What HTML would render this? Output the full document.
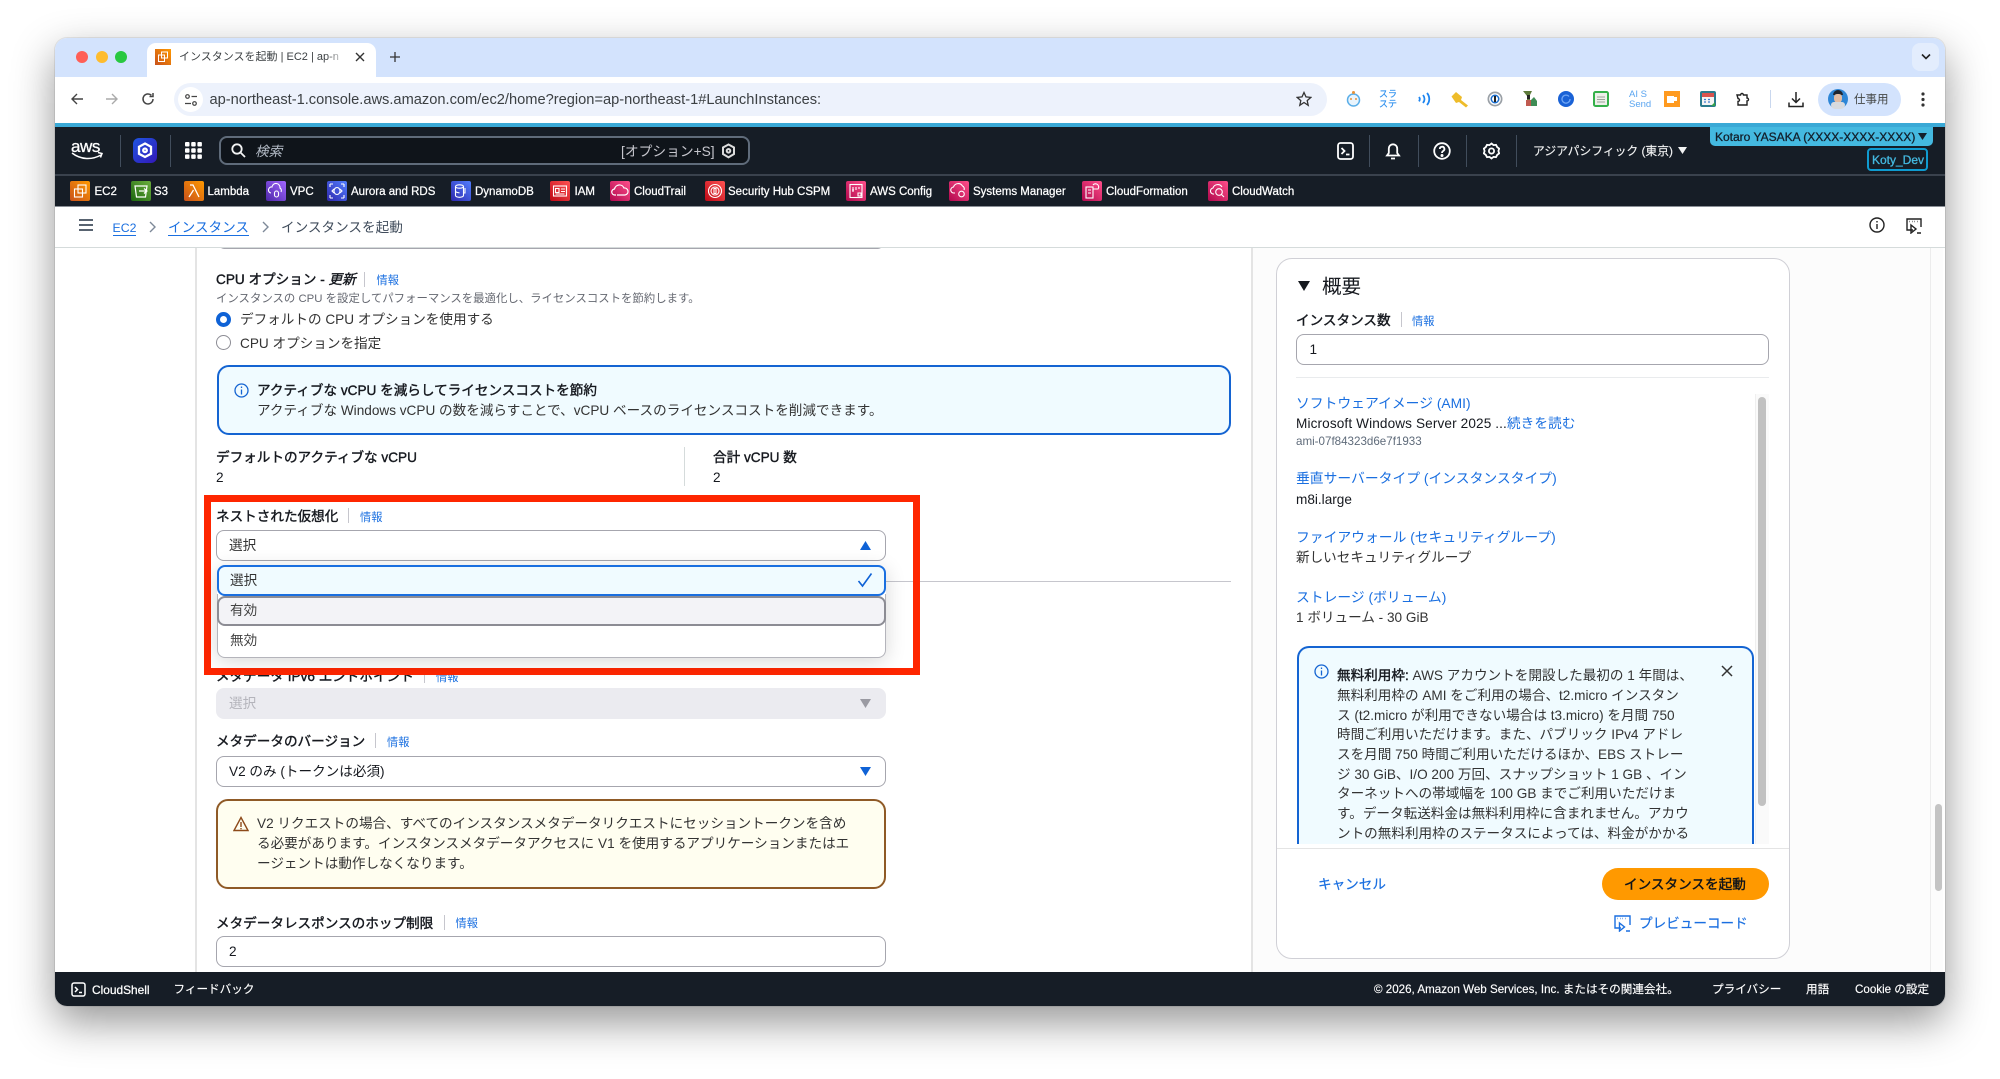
<!DOCTYPE html>
<html lang="ja"><head><meta charset="utf-8"><title>インスタンスを起動</title>
<style>
*{box-sizing:border-box}
html,body{margin:0;padding:0;width:2000px;height:1079px;overflow:hidden;background:#fff}
body{font-family:"Liberation Sans","Noto Sans CJK JP",sans-serif;color:#16191f;position:relative}
.a{position:absolute}
.t{position:absolute;white-space:nowrap;line-height:20px;height:20px;font-size:13.6px;color:#16191f;margin-top:1px}
.b{font-weight:400;-webkit-text-stroke:.4px currentColor}
.l{color:#1a6fe0}
.rl{font-size:13.8px}
.i{font-size:11.2px;color:#1a6fe0}
.w{color:#fff;font-size:11.6px}
.fi{position:absolute;top:181px;width:20px;height:20px;border-radius:2px}
.fi svg{position:absolute;left:0;top:0}
.f{position:absolute;top:182px;line-height:20px;font-size:11.5px;color:#fff;white-space:nowrap;-webkit-text-stroke:.25px #fff}
.d{position:absolute;width:1px;background:#c6c6cd}
.nd{position:absolute;width:1px;background:#414d5c;top:135px;height:32px}
.inp{position:absolute;background:#fff;border:1.5px solid #a6a6ae;border-radius:8px}
.or{background:linear-gradient(45deg,#c8511b,#ff9900)}.gr{background:linear-gradient(45deg,#1b660f,#6cae3e)}
.pu{background:linear-gradient(45deg,#4d27a8,#a166ff)}.bl{background:linear-gradient(45deg,#2e27ad,#527fff)}
.re{background:linear-gradient(45deg,#bd0816,#ff5252)}.pk{background:linear-gradient(45deg,#b0084d,#ff4f8b)}
</style></head><body>

<!-- window -->
<div class="a" style="left:55px;top:38px;width:1890px;height:968px;border-radius:12px;box-shadow:0 16px 42px rgba(0,0,0,.42),0 0 0 1px rgba(0,0,0,.08);background:#fff;overflow:hidden">
<div style="position:absolute;left:-55px;top:-38px;width:2000px;height:1079px">

<!-- tab strip -->
<div class="a" style="left:0;top:37px;width:2000px;height:40px;background:#d3e3fd"></div>
<div class="a" style="left:75.5px;top:51px;width:12px;height:12px;border-radius:50%;background:#ff5f57"></div>
<div class="a" style="left:95.5px;top:51px;width:12px;height:12px;border-radius:50%;background:#febc2e"></div>
<div class="a" style="left:115px;top:51px;width:12px;height:12px;border-radius:50%;background:#28c840"></div>
<div class="a" style="left:147px;top:43px;width:229px;height:34px;background:#fff;border-radius:9px 9px 0 0"></div>
<div class="a or" style="left:155px;top:49px;width:16px;height:16px"><svg width="16" height="16" fill="none" stroke="#fff" stroke-width="1"><rect x="6.5" y="3" width="6" height="6"/><rect x="3.5" y="6" width="6" height="6.5"/></svg></div>
<div class="t" style="left:179px;top:46px;font-size:11px;color:#3c4043;width:165px;overflow:hidden">インスタンスを起動 | EC2 | ap-n</div>
<div class="a" style="left:326px;top:47px;width:20px;height:20px;background:linear-gradient(90deg,rgba(255,255,255,0),#fff)"></div>
<svg class="a" style="left:355px;top:52px" width="10" height="10" stroke="#333" stroke-width="1.4"><path d="M1 1l8 8M9 1l-8 8"/></svg>
<svg class="a" style="left:389px;top:51px" width="12" height="12" stroke="#333" stroke-width="1.3"><path d="M6 1v10M1 6h10"/></svg>
<div class="a" style="left:1912px;top:43px;width:27px;height:28px;border-radius:8px;background:#e3edfd"></div>
<svg class="a" style="left:1921px;top:53px" width="10" height="8" fill="none" stroke="#222" stroke-width="1.6"><path d="M1 1.5l4 4 4-4"/></svg>

<!-- toolbar -->
<div class="a" style="left:0;top:77px;width:2000px;height:46px;background:#fff"></div>
<svg class="a" style="left:70px;top:92px" width="14" height="14" fill="none" stroke="#444" stroke-width="1.4"><path d="M13 7H2M7 2L2 7l5 5"/></svg>
<svg class="a" style="left:105px;top:92px" width="14" height="14" fill="none" stroke="#aaa" stroke-width="1.4"><path d="M1 7h11M7 2l5 5-5 5"/></svg>
<svg class="a" style="left:141px;top:92px" width="14" height="14" fill="none" stroke="#444" stroke-width="1.5"><path d="M12 7a5 5 0 1 1-1.6-3.7M12 1v3.5H8.5"/></svg>
<div class="a" style="left:174px;top:83px;width:1153px;height:33px;background:#edf2fc;border-radius:17px"></div>
<div class="a" style="left:178px;top:87px;width:25px;height:25px;background:#fff;border-radius:50%"></div>
<svg class="a" style="left:184px;top:93px" width="14" height="14" fill="none" stroke="#444" stroke-width="1.2"><circle cx="3.5" cy="3.5" r="1.8"/><path d="M7.5 3.5H13M1 10.5h6"/><circle cx="10.5" cy="10.5" r="1.8"/></svg>
<div class="t" style="left:209.5px;top:88.5px;font-size:14.65px;color:#3c4043">ap-northeast-1.console.aws.amazon.com/ec2/home?region=ap-northeast-1#LaunchInstances:</div>
<svg class="a" style="left:1296px;top:91px" width="16" height="16" fill="none" stroke="#333" stroke-width="1.3"><path d="M8 1.5l2 4.4 4.8.5-3.6 3.2 1 4.7L8 11.5l-4.2 2.8 1-4.7L1.2 6.4 6 5.9z"/></svg>
<!-- extensions -->
<svg class="a" style="left:1346px;top:90px" width="15" height="18"><circle cx="7.5" cy="10" r="6" fill="#e8f4fd" stroke="#5aaee8" stroke-width="1.5"/><circle cx="7.5" cy="2.5" r="1.5" fill="#e8933a"/><circle cx="5" cy="9" r="1" fill="#e8933a"/><circle cx="10" cy="9" r="1" fill="#e8933a"/></svg>
<div class="a" style="left:1379px;top:90px;font-size:9px;line-height:9.5px;color:#2f90ee;width:20px;white-space:nowrap;-webkit-text-stroke:.2px #2f90ee">スラ<br>ステ</div>
<svg class="a" style="left:1417px;top:91px" width="15" height="16" fill="none" stroke="#1f86f0" stroke-width="1.8"><path d="M2 6c1 1.3 1 3 0 4.4M6 4c2 2.5 2 5.500 0 8M10 2c3 3.500 3 8.500 0 12"/></svg>
<svg class="a" style="left:1451px;top:91px" width="18" height="17"><path d="M0.500 5.500L5 1l6 5-1 3 7 5.500-2 2-7-5.500-3 1z" fill="#eebc2a"/></svg>
<svg class="a" style="left:1487px;top:91px" width="16" height="16"><circle cx="8" cy="8" r="7.500" fill="#9aa0a6"/><circle cx="8" cy="8" r="5.800" fill="#fff"/><circle cx="8" cy="8" r="4.500" fill="#1a6fd0"/><circle cx="8" cy="8" r="3" fill="#fff"/><rect x="7" y="5" width="2" height="6" fill="#222"/></svg>
<svg class="a" style="left:1523px;top:90px" width="15" height="18"><path d="M0 1h9l-2 4v10H4V6z" fill="#5d7a3a"/><rect x="4" y="5" width="3" height="4" fill="#222"/><rect x="3" y="10" width="5" height="6" fill="#c05a50"/><path d="M8 10l3-3 3 4v5H8z" fill="#3f8c55"/></svg>
<svg class="a" style="left:1558px;top:91px" width="16" height="16"><circle cx="8" cy="8" r="8" fill="#1a62d6"/><path d="M11 5.500A4 4 0 1 0 12 8" fill="none" stroke="#6ea5f5" stroke-width="1.300"/></svg>
<svg class="a" style="left:1593px;top:91px" width="16" height="16"><rect x="1" y="1" width="14" height="14" rx="1.500" fill="#eef0ea" stroke="#35b04a" stroke-width="2"/><path d="M4 6h8M4 8.500h8M4 11h8" stroke="#9aa39a"/></svg>
<div class="a" style="left:1629px;top:90px;font-size:9.500px;line-height:9.500px;color:#5aa5f0;text-align:center;width:16px;white-space:nowrap">AI S<br>Send</div>
<div class="a" style="left:1664px;top:91px;width:16px;height:16px;background:#ff9a1f"></div><div class="a" style="left:1667px;top:96px;width:7px;height:7px;background:#fff"></div><div class="a" style="left:1674px;top:97px;width:3px;height:4px;background:#fff"></div>
<svg class="a" style="left:1700px;top:91px" width="16" height="16"><rect width="16" height="16" rx="2" fill="#2a7a8e"/><rect x="2" y="2" width="12" height="12" fill="#f4f4f4"/><rect x="2" y="2" width="12" height="4" fill="#d9534f"/><path d="M4 8.500h2M8 8.500h2M4 11h2M8 11h2" stroke="#3a7ad0" stroke-width="1.200"/><path d="M11 15l4-4v4z" fill="#35a04a"/></svg>
<svg class="a" style="left:1735px;top:91px" width="16" height="16" fill="none" stroke="#222" stroke-width="1.400"><path d="M2 4h3.500a1.500 1.500 0 0 1 3 0H12v3a1.500 1.500 0 0 1 0 3v4H3v-3.500a1.500 1.500 0 0 0 0-3z"/></svg>
<div class="a" style="left:1770px;top:90px;width:1px;height:18px;background:#c9d7ee"></div>
<svg class="a" style="left:1788px;top:91px" width="16" height="17" fill="none" stroke="#222" stroke-width="1.500"><path d="M8 1v10M4 7.500l4 4 4-4M1 11.500v4h14v-4"/></svg>
<div class="a" style="left:1818px;top:83px;width:83px;height:33px;border-radius:17px;background:#d3e3fd"></div>
<div class="a" style="left:1828px;top:89px;width:20px;height:20px;border-radius:50%;background:#2e86d6;overflow:hidden"></div>
<div class="a" style="left:1833px;top:90px;width:10px;height:5px;border-radius:5px 5px 0 0;background:#1f2630"></div>
<div class="a" style="left:1834px;top:94px;width:8px;height:9px;border-radius:3px 3px 4px 4px;background:#e2bda4"></div>
<div class="a" style="left:1831px;top:102px;width:14px;height:7px;background:#d8dade;border-radius:5px 5px 7px 7px"></div>
<div class="t" style="left:1854px;top:88.5px;font-size:11.500px;color:#444746">仕事用</div>
<svg class="a" style="left:1921px;top:92px" width="4" height="15" fill="#333"><circle cx="2" cy="2" r="1.600"/><circle cx="2" cy="7.500" r="1.600"/><circle cx="2" cy="13" r="1.600"/></svg>

<!-- aws nav -->
<div class="a" style="left:0;top:123px;width:2000px;height:4px;background:#3aa9d6"></div>
<div class="a" style="left:0;top:127px;width:2000px;height:79px;background:#161d26"></div>
<div class="a" style="left:0;top:174px;width:2000px;height:1.500px;background:#3a424d"></div>
<div class="a" style="left:0;top:205.500px;width:2000px;height:1.500px;background:#8a8f96"></div>
<div class="a" style="left:71px;top:137px;line-height:20px;color:#fff;font-size:17px;letter-spacing:-.4px;-webkit-text-stroke:.3px #fff">aws</div>
<svg class="a" style="left:71px;top:151px" width="33" height="11" fill="none" stroke="#fff" stroke-width="1.500"><path d="M1 2c9 7 20 7 29 2M27 1.500l4 1-1.500 4"/></svg>
<div class="nd" style="left:120px"></div>
<div class="a" style="left:133px;top:138px;width:24px;height:25px;border-radius:6px;background:linear-gradient(135deg,#1f55e0,#3318b8)"></div>
<svg class="a" style="left:137px;top:142px" width="16" height="17" fill="none" stroke="#fff" stroke-width="2.300"><path d="M8 1.500l6 3.300v7L8 15l-6-3.200v-7z"/><circle cx="8" cy="8.300" r="1.800" /></svg>
<div class="nd" style="left:170px"></div>
<svg class="a" style="left:185px;top:142px" width="17" height="17" fill="#fff"><rect width="4.500" height="4.500" rx="1"/><rect x="6.200" width="4.500" height="4.500" rx="1"/><rect x="12.400" width="4.500" height="4.500" rx="1"/><rect y="6.200" width="4.500" height="4.500" rx="1"/><rect x="6.200" y="6.200" width="4.500" height="4.500" rx="1"/><rect x="12.400" y="6.200" width="4.500" height="4.500" rx="1"/><rect y="12.400" width="4.500" height="4.500" rx="1"/><rect x="6.200" y="12.400" width="4.500" height="4.500" rx="1"/><rect x="12.400" y="12.400" width="4.500" height="4.500" rx="1"/></svg>
<div class="a" style="left:219px;top:136px;width:531px;height:29px;border-radius:8px;background:#0f141a;border:2px solid #5f6b7a"></div>
<svg class="a" style="left:231px;top:143px" width="15" height="15" fill="none" stroke="#f2f3f3" stroke-width="1.800"><circle cx="6" cy="6" r="4.700"/><path d="M9.500 9.500L14 14"/></svg>
<div class="t" style="left:255px;top:140.5px;color:#b6bec9;font-style:italic;font-size:13.600px">検索</div>
<div class="t" style="left:621px;top:140.5px;color:#c6c6cd;font-size:13.750px">[オプション+S]</div>
<svg class="a" style="left:721px;top:143px" width="15" height="16" fill="none" stroke="#dcdcdc" stroke-width="2"><path d="M7.500 1.500l5.500 3v6.500l-5.500 3.300L2 11V4.500z"/><circle cx="7.500" cy="7.800" r="1.800"/></svg>

<svg class="a" style="left:1337px;top:142px" width="17" height="18" fill="none" stroke="#fff" stroke-width="1.800"><rect x="1" y="1" width="15" height="16" rx="2.500"/><path d="M4.500 6l3 3-3 3M9 12.500h3.500"/></svg>
<div class="nd" style="left:1369px"></div>
<svg class="a" style="left:1385px;top:142px" width="16" height="18" fill="none" stroke="#fff" stroke-width="1.800"><path d="M2 13.500h12l-1.800-2.500V6.500a4.200 4.200 0 0 0-8.400 0V11zM6 16.500h4"/></svg>
<div class="nd" style="left:1418px"></div>
<svg class="a" style="left:1433px;top:142px" width="18" height="18" fill="none" stroke="#fff" stroke-width="1.800"><circle cx="9" cy="9" r="7.800"/><path d="M6.800 7a2.300 2.300 0 1 1 3.400 2c-.8.500-1.200 1-1.200 2"/><circle cx="9" cy="13.500" r=".6" fill="#fff"/></svg>
<div class="nd" style="left:1466px"></div>
<svg class="a" style="left:1483px;top:142px" width="17" height="18" fill="none" stroke="#fff" stroke-width="1.800"><path d="M8.500 1.500l2 1.600 2.500-.3 1.200 2.300 2 1.500-.8 2.400.8 2.400-2 1.500-1.200 2.300-2.500-.3-2 1.600-2-1.600-2.500.3-1.200-2.300-2-1.500.8-2.400-.8-2.400 2-1.500L4 2.800l2.500.3z"/><circle cx="8.500" cy="9" r="2.600"/></svg>
<div class="nd" style="left:1516px"></div>
<div class="t" style="left:1533px;top:140px;color:#f2f3f3;font-size:11.800px;-webkit-text-stroke:.15px #f2f3f3">アジアパシフィック (東京)</div>
<svg class="a" style="left:1678px;top:147px" width="9" height="7" fill="#f2f3f3"><path d="M0 0h9L4.500 7z"/></svg>
<div class="a" style="left:1710px;top:127px;width:223px;height:18.500px;background:#44b9e0;border-radius:0 0 5px 5px"></div>
<div class="t" style="left:1715px;top:126px;font-size:12px;color:#13202c;-webkit-text-stroke:.3px #13202c">Kotaro YASAKA (XXXX-XXXX-XXXX)</div>
<svg class="a" style="left:1918px;top:133px" width="9" height="7" fill="#13202c"><path d="M0 0h9L4.500 7z"/></svg>
<div class="a" style="left:1867px;top:148px;width:61px;height:23px;border:2px solid #0f9bd0;border-radius:4px"></div>
<div class="t" style="left:1872px;top:149px;font-size:12px;color:#44b9e0;-webkit-text-stroke:.3px #44b9e0">Koty_Dev</div>

<!-- favorites -->
<div class="fi or" style="left:70px"><svg width="20" height="20" fill="none" stroke="#fff" stroke-width="1.100"><rect x="8" y="4" width="8" height="8"/><rect x="4.500" y="8" width="8" height="8"/></svg></div><div class="f" style="left:94.500px">EC2</div>
<div class="fi gr" style="left:131px"><svg width="20" height="20" fill="none" stroke="#fff" stroke-width="1.200"><path d="M4 5h12l-1.500 11h-9zM8 10h8M13 7.500l3 2.500-3 2.500"/></svg></div><div class="f" style="left:154px">S3</div>
<div class="fi or" style="left:183.500px"><svg width="20" height="20" fill="none" stroke="#fff" stroke-width="1.300"><path d="M6 4h3l6 12M9.500 9L5 16"/></svg></div><div class="f" style="left:207.500px">Lambda</div>
<div class="fi pu" style="left:266px"><svg width="20" height="20" fill="none" stroke="#fff" stroke-width="1.100"><path d="M5 12a3 3 0 0 1 1-6 4 4 0 0 1 8 1 3 3 0 0 1 1 4"/><rect x="8.500" y="10" width="4" height="6" rx="2"/></svg></div><div class="f" style="left:290px">VPC</div>
<div class="fi bl" style="left:327px"><svg width="20" height="20" fill="none" stroke="#fff" stroke-width="1.100"><ellipse cx="10" cy="10" rx="3" ry="3.500"/><path d="M3 3h3M14 3h3M3 17h3M14 17h3M3 3v3M17 3v3M3 14v3M17 14v3M7 8L5 10l2 2M13 8l2 2-2 2"/></svg></div><div class="f" style="left:351px">Aurora and RDS</div>
<div class="fi bl" style="left:451px"><svg width="20" height="20" fill="none" stroke="#fff" stroke-width="1.100"><ellipse cx="8.500" cy="5.500" rx="4" ry="1.700"/><path d="M4.500 5.500v9c0 1 1.700 1.800 4 1.800s4-.8 4-1.800v-9M4.500 10c0 1 1.700 1.800 4 1.800M14 7v5h-2"/></svg></div><div class="f" style="left:475px">DynamoDB</div>
<div class="fi re" style="left:550px"><svg width="20" height="20" fill="none" stroke="#fff" stroke-width="1.100"><rect x="3.500" y="5" width="13" height="10"/><rect x="5.500" y="7.500" width="3.500" height="4"/><path d="M11 8h4M11 10.500h4M5.500 13h9"/></svg></div><div class="f" style="left:574.500px">IAM</div>
<div class="fi pk" style="left:610px"><svg width="20" height="20" fill="none" stroke="#fff" stroke-width="1.200"><path d="M6 14H5a3 3 0 0 1-.5-6 5 5 0 0 1 9.500-1 3.500 3.500 0 0 1 1 7h-8"/></svg></div><div class="f" style="left:634px">CloudTrail</div>
<div class="fi re" style="left:704.500px"><svg width="20" height="20" fill="none" stroke="#fff" stroke-width="1.100"><circle cx="10" cy="10" r="6.500"/><circle cx="10" cy="10" r="4"/><path d="M9 7.500h2v5H9z"/></svg></div><div class="f" style="left:728px">Security Hub CSPM</div>
<div class="fi pk" style="left:846px"><svg width="20" height="20" fill="none" stroke="#fff" stroke-width="1.100"><rect x="4" y="3.500" width="12" height="13"/><path d="M7 6v5M10 6v3M13 6v2M6 9h2M12 12h3v3h-3z"/></svg></div><div class="f" style="left:870px">AWS Config</div>
<div class="fi pk" style="left:949px"><svg width="20" height="20" fill="none" stroke="#fff" stroke-width="1.100"><path d="M6 12H5a3 3 0 0 1-.5-6 5 5 0 0 1 9-1 3 3 0 0 1 1.500 4"/><circle cx="12.500" cy="13" r="2.800"/></svg></div><div class="f" style="left:973px">Systems Manager</div>
<div class="fi pk" style="left:1082px"><svg width="20" height="20" fill="none" stroke="#fff" stroke-width="1.100"><rect x="4" y="6" width="7" height="11"/><path d="M11 4a3 3 0 0 1 5 4h-5M6 9h3M6 12h3"/></svg></div><div class="f" style="left:1106px">CloudFormation</div>
<div class="fi pk" style="left:1208px"><svg width="20" height="20" fill="none" stroke="#fff" stroke-width="1.100"><path d="M6 13a3 3 0 0 1-1-6 5 5 0 0 1 9-1"/><circle cx="11" cy="11" r="3.300"/><path d="M13.500 13.500L16 16"/></svg></div><div class="f" style="left:1232px">CloudWatch</div>

<!-- main area -->
<div class="a" style="left:0;top:248px;width:2000px;height:724px;background:#fff"></div>
<div class="a" style="left:195px;top:248px;width:1.500px;height:724px;background:#e4e4e4"></div>
<div class="a" style="left:1251px;top:248px;width:1.500px;height:724px;background:#e4e4e4"></div>
<div class="a" style="left:1252.500px;top:248px;width:690px;height:724px;background:#fcfcfc"></div>
<div class="a" style="left:1930px;top:248px;width:1px;height:724px;background:#ececec"></div>
<div class="a" style="left:1935px;top:804px;width:7px;height:87px;border-radius:4px;background:#c4c4c4"></div>
<div class="a" style="left:219px;top:230px;width:664px;height:19px;border:1.500px solid #a6a6ae;border-top:0;border-radius:0 0 5px 5px;background:#fff"></div>

<!-- breadcrumb -->
<div class="a" style="left:0;top:207px;width:2000px;height:40px;background:#fff"></div>
<div class="a" style="left:0;top:247px;width:2000px;height:1px;background:#d5dbdb"></div>
<div class="t l" style="left:112.500px;top:217px;font-size:12.300px">EC2</div><div class="a" style="left:112.500px;top:235px;width:23px;height:1px;background:#1a6fe0"></div>
<svg class="a" style="left:149px;top:221px" width="8" height="12" fill="none" stroke="#7d8998" stroke-width="1.400"><path d="M1 1l5 5-5 5"/></svg>
<div class="t l" style="left:168px;top:217px">インスタンス</div><div class="a" style="left:168px;top:235px;width:81px;height:1px;background:#1a6fe0"></div>
<svg class="a" style="left:262px;top:221px" width="8" height="12" fill="none" stroke="#7d8998" stroke-width="1.400"><path d="M1 1l5 5-5 5"/></svg>
<div class="t" style="left:281px;top:217px;color:#414d5c">インスタンスを起動</div>
<svg class="a" style="left:79px;top:219px" width="14" height="12" stroke="#414d5c" stroke-width="1.700"><path d="M0 1h14M0 6h14M0 11h14"/></svg>
<svg class="a" style="left:1869px;top:217px" width="16" height="16" fill="none" stroke="#222" stroke-width="1.400"><circle cx="8" cy="8" r="7"/><path d="M8 7v5M8 4v1.500"/></svg>
<svg class="a" style="left:1906px;top:218px" width="16" height="16" fill="none" stroke="#222" stroke-width="1.400"><path d="M7 12H1V1h14v8M3.500 3.500h.5M6 3.500h.5M8.500 3.500h.5M11 3.500h.5M5 7l5 4-5 4zM11 15h4"/></svg>

<!-- CPU options -->
<div class="t b" style="left:216px;top:269px;font-size:13.6px">CPU オプション - <i>更新</i></div>
<div class="d" style="left:364px;top:272px;height:15px"></div>
<div class="t i" style="left:376.500px;top:270px">情報</div>
<div class="t" style="left:216px;top:288px;font-size:11.400px;color:#656871">インスタンスの CPU を設定してパフォーマンスを最適化し、ライセンスコストを節約します。</div>
<div class="a" style="left:216px;top:312px;width:15px;height:15px;border-radius:50%;border:4.500px solid #0f62d6;background:#fff"></div>
<div class="t" style="left:240px;top:309px;color:#333">デフォルトの CPU オプションを使用する</div>
<div class="a" style="left:216px;top:335px;width:15px;height:15px;border-radius:50%;border:1.300px solid #8c8c94;background:#fff"></div>
<div class="t" style="left:240px;top:332.500px;color:#333">CPU オプションを指定</div>

<div class="a" style="left:216.500px;top:365px;width:1014.500px;height:70px;border:2px solid #1464d2;border-radius:12px;background:#f0fbff"></div>
<svg class="a" style="left:234px;top:383px" width="15" height="15" fill="none" stroke="#1464d2" stroke-width="1.300"><circle cx="7.500" cy="7.500" r="6.500"/><path d="M7.500 6.500v5M7.500 3.500v1.500"/></svg>
<div class="t b" style="left:257px;top:380px">アクティブな vCPU を減らしてライセンスコストを節約</div>
<div class="t" style="left:257px;top:400px;color:#333">アクティブな Windows vCPU の数を減らすことで、vCPU ベースのライセンスコストを削減できます。</div>

<div class="t b" style="left:216px;top:447px">デフォルトのアクティブな vCPU</div>
<div class="t" style="left:216px;top:467px">2</div>
<div class="d" style="left:684px;top:447px;height:39px;background:#d5dbdb"></div>
<div class="t b" style="left:713px;top:447px">合計 vCPU 数</div>
<div class="t" style="left:713px;top:467px">2</div>

<!-- divider & hidden rows -->
<div class="a" style="left:900px;top:581px;width:331px;height:1px;background:#c6c6cd"></div>
<div class="t b" style="left:216px;top:666px">メタデータ IPv6 エンドポイント</div>
<div class="d" style="left:424px;top:668px;height:15px"></div>
<div class="t i" style="left:436px;top:667px">情報</div>
<div class="a" style="left:216px;top:688px;width:670px;height:31px;border-radius:8px;background:#ebebf0"></div>
<div class="t" style="left:229px;top:693px;color:#b4b4bb">選択</div>
<svg class="a" style="left:860px;top:699px" width="11" height="9" fill="#9a9aa2"><path d="M0 0h11L5.500 9z"/></svg>
<div class="t b" style="left:216px;top:731px">メタデータのバージョン</div>
<div class="d" style="left:375px;top:733px;height:15px"></div>
<div class="t i" style="left:387px;top:732px">情報</div>
<div class="inp" style="left:216px;top:756px;width:670px;height:30.500px"></div>
<div class="t" style="left:229px;top:761px">V2 のみ (トークンは必須)</div>
<svg class="a" style="left:860px;top:767px" width="11" height="9" fill="#0f62d6"><path d="M0 0h11L5.500 9z"/></svg>

<div class="a" style="left:216px;top:798.500px;width:670px;height:90px;border:2px solid #8f5a26;border-radius:12px;background:#fffef0"></div>
<svg class="a" style="left:233px;top:816px" width="16" height="16" fill="none" stroke="#8d4a1a" stroke-width="1.400"><path d="M8 1.500L15 14.500H1zM8 6v5M8 12v1.300"/></svg>
<div class="t" style="left:257px;top:813px;color:#333">V2 リクエストの場合、すべてのインスタンスメタデータリクエストにセッショントークンを含め</div>
<div class="t" style="left:257px;top:833px;color:#333">る必要があります。インスタンスメタデータアクセスに V1 を使用するアプリケーションまたはエ</div>
<div class="t" style="left:257px;top:853px;color:#333">ージェントは動作しなくなります。</div>

<div class="t b" style="left:216px;top:912.500px">メタデータレスポンスのホップ制限</div>
<div class="d" style="left:443.500px;top:915px;height:15px"></div>
<div class="t i" style="left:455.500px;top:913px">情報</div>
<div class="inp" style="left:216px;top:936px;width:670px;height:31px"></div>
<div class="t" style="left:229px;top:941px">2</div>

<!-- red box -->
<div class="a" style="left:204px;top:495px;width:716px;height:180px;background:#fff;border:7px solid #fe2600"></div>
<div class="a" style="left:886px;top:581px;width:27px;height:1px;background:#c6c6cd"></div>
<div class="t b" style="left:216px;top:506px">ネストされた仮想化</div>
<div class="d" style="left:348px;top:508px;height:15px"></div>
<div class="t i" style="left:360px;top:507px">情報</div>
<div class="inp" style="left:216px;top:530px;width:670px;height:31px"></div>
<div class="t" style="left:229px;top:535px;color:#333">選択</div>
<svg class="a" style="left:860px;top:541px" width="11" height="9" fill="#0f62d6"><path d="M0 9h11L5.500 0z"/></svg>
<div class="a" style="left:216.500px;top:565px;width:669.500px;height:92px;border-radius:8px;box-shadow:0 4px 20px rgba(0,0,0,.16)"></div>
<div class="a" style="left:216.500px;top:594px;width:669.500px;height:63.500px;background:#fff;border:1.500px solid #b4b4bb;border-top:0;border-radius:0 0 8px 8px"></div>
<div class="a" style="left:216.500px;top:565px;width:669.500px;height:31px;background:#f0fbff;border:2px solid #1a6fe0;border-radius:8px"></div>
<div class="t" style="left:230px;top:570px;color:#333">選択</div>
<svg class="a" style="left:857px;top:572px" width="16" height="16" fill="none" stroke="#0f62d6" stroke-width="1.600"><path d="M1.500 9l4 5L14.500 1.500"/></svg>
<div class="a" style="left:216.500px;top:595.500px;width:669.500px;height:30px;background:#f3f3f7;border:2px solid #8c8c94;border-radius:8px"></div>
<div class="t" style="left:230px;top:600px;color:#444">有効</div>
<div class="t" style="left:230px;top:630px;color:#444">無効</div>

<!-- right panel -->
<div class="a" style="left:1276px;top:258px;width:513.500px;height:701px;border:1.500px solid #d0d0d6;border-radius:16px;background:#fff"></div>
<svg class="a" style="left:1298px;top:281px" width="12" height="10" fill="#16191f"><path d="M0 0h12L6 10z"/></svg>
<div class="t" style="left:1322px;top:276px;font-size:19.500px">概要</div>
<div class="t b" style="left:1296px;top:310px">インスタンス数</div>
<div class="d" style="left:1400.500px;top:312px;height:15px"></div>
<div class="t i" style="left:1412px;top:311px">情報</div>
<div class="inp" style="left:1296px;top:334px;width:473px;height:31px"></div>
<div class="t" style="left:1309.500px;top:339px">1</div>
<div class="a" style="left:1296px;top:377px;width:473px;height:1px;background:#e9ebed"></div>

<div class="a" style="left:1754.500px;top:394px;width:14.500px;height:450px;background:#fafafa;border-left:1px solid #efefef"></div>
<div class="a" style="left:1758px;top:397px;width:8px;height:409px;border-radius:4px;background:#c1c1c1"></div>
<div class="t l rl" style="left:1296px;top:393px">ソフトウェアイメージ (AMI)</div>
<div class="t" style="left:1296px;top:413px;letter-spacing:.12px">Microsoft Windows Server 2025 ...<span class="l">続きを読む</span></div>
<div class="t" style="left:1296px;top:431px;font-size:11.600px;color:#5f6b7a">ami-07f84323d6e7f1933</div>
<div class="t l rl" style="left:1296px;top:468px">垂直サーバータイプ (インスタンスタイプ)</div>
<div class="t" style="left:1296px;top:488.500px">m8i.large</div>
<div class="t l rl" style="left:1296px;top:527px">ファイアウォール (セキュリティグループ)</div>
<div class="t" style="left:1296px;top:547px;color:#333">新しいセキュリティグループ</div>
<div class="t l rl" style="left:1296px;top:586.500px">ストレージ (ボリューム)</div>
<div class="t" style="left:1296px;top:606.500px;color:#333">1 ボリューム - 30 GiB</div>

<div class="a" style="left:1296.500px;top:646px;width:457.500px;height:198px;border:2px solid #1464d2;border-bottom:0;border-radius:12px 12px 0 0;background:#f0fbff"></div>
<svg class="a" style="left:1314px;top:664px" width="15" height="15" fill="none" stroke="#1464d2" stroke-width="1.300"><circle cx="7.500" cy="7.500" r="6.500"/><path d="M7.500 6.500v5M7.500 3.500v1.500"/></svg>
<svg class="a" style="left:1721px;top:665px" width="12" height="12" stroke="#333" stroke-width="1.500"><path d="M1 1l10 10M11 1L1 11"/></svg>
<div class="t" style="left:1337px;top:665px;color:#333"><b style="font-weight:400;color:#16191f;-webkit-text-stroke:.4px #16191f">無料利用枠:</b> AWS アカウントを開設した最初の 1 年間は、</div>
<div class="t" style="left:1337px;top:685px;color:#333">無料利用枠の AMI をご利用の場合、t2.micro インスタン</div>
<div class="t" style="left:1337px;top:704.500px;color:#333">ス (t2.micro が利用できない場合は t3.micro) を月間 750</div>
<div class="t" style="left:1337px;top:724px;color:#333">時間ご利用いただけます。また、パブリック IPv4 アドレ</div>
<div class="t" style="left:1337px;top:744px;color:#333">スを月間 750 時間ご利用いただけるほか、EBS ストレー</div>
<div class="t" style="left:1337px;top:763.500px;color:#333">ジ 30 GiB、I/O 200 万回、スナップショット 1 GB 、イン</div>
<div class="t" style="left:1337px;top:783px;color:#333">ターネットへの帯域幅を 100 GB までご利用いただけま</div>
<div class="t" style="left:1337px;top:802.500px;color:#333">す。データ転送料金は無料利用枠に含まれません。アカウ</div>
<div class="t" style="left:1337px;top:822.500px;color:#333">ントの無料利用枠のステータスによっては、料金がかかる</div>

<div class="a" style="left:1277px;top:847.500px;width:512px;height:1.500px;background:#e4e4e4"></div>
<div class="t b l" style="left:1318px;top:873.500px;-webkit-text-stroke-width:.2px">キャンセル</div>
<div class="a" style="left:1602px;top:868px;width:167px;height:32px;border-radius:16px;background:#ff9900"></div>
<div class="t b" style="left:1624px;top:874px;color:#0f141a">インスタンスを起動</div>
<svg class="a" style="left:1614px;top:915px" width="17" height="17" fill="none" stroke="#1a6fe0" stroke-width="1.400"><path d="M7 13H1V1h15v9M3.500 3.500h.5M6 3.500h.5M8.500 3.500h.5M11 3.500h.5M5.500 8l5 4-5 4zM12 16h4"/></svg>
<div class="t b l" style="left:1639px;top:913px;-webkit-text-stroke-width:.2px">プレビューコード</div>

<!-- footer -->
<div class="a" style="left:0;top:972px;width:2000px;height:34px;background:#161d26"></div>
<svg class="a" style="left:71px;top:982px" width="15" height="15" fill="none" stroke="#fff" stroke-width="1.500"><rect x="1" y="1" width="13" height="13" rx="2"/><path d="M4 5l2.500 2.500L4 10M8 10.500h3"/></svg>
<div class="t w" style="left:92px;top:979px;font-size:11.900px;-webkit-text-stroke:.25px #fff">CloudShell</div>
<div class="t w" style="left:173.500px;top:979px;-webkit-text-stroke:.15px #fff">フィードバック</div>
<div class="t w" style="left:1374px;top:979px;-webkit-text-stroke:.15px #fff">© 2026, Amazon Web Services, Inc. またはその関連会社。</div>
<div class="t w" style="left:1712px;top:979px;-webkit-text-stroke:.15px #fff">プライバシー</div>
<div class="t w" style="left:1806px;top:979px;-webkit-text-stroke:.15px #fff">用語</div>
<div class="t w" style="left:1855px;top:979px;-webkit-text-stroke:.15px #fff">Cookie の設定</div>

</div></div>
</body></html>
